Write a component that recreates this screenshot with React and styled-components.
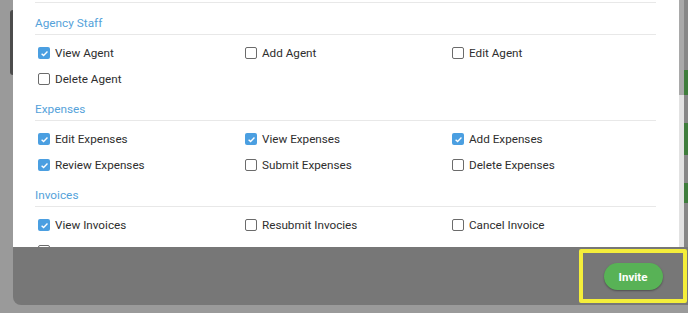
import React from "react";
import styled, { createGlobalStyle } from "styled-components";

const GlobalStyle = createGlobalStyle`
  html, body {
    margin: 0;
    padding: 0;
    background: #9a9a9a;
  }
  body {
    font-family: Roboto, "Liberation Sans", Arial, sans-serif;
  }
`;

const Page = styled.div`
  width: 688px;
  height: 313px;
  display: flex;
  background: #9a9a9a;
  overflow: hidden;
`;

const LeftGutter = styled.div`
  width: 13px;
  flex-shrink: 0;
  display: flex;
  justify-content: flex-end;
  align-items: flex-start;
  padding-top: 10px;
  box-sizing: border-box;
`;

const DarkTab = styled.div`
  width: 3px;
  height: 65px;
  background: #4c4c4c;
  border-radius: 3px 0 0 3px;
`;

const Main = styled.div`
  flex: 1;
  display: flex;
  flex-direction: column;
  min-width: 0;
`;

const Upper = styled.div`
  height: 247px;
  display: flex;
  flex-shrink: 0;
`;

const Body = styled.div`
  flex: 1;
  background: #fff;
  overflow: hidden;
  padding: 2px 23px 0 22px;
  box-sizing: border-box;
`;

const Rule = styled.div`
  height: 1px;
  background: #e8e8e8;
`;

const Heading = styled.div`
  height: 23px;
  line-height: 24px;
  margin-top: ${(p) => (p.first ? "8px" : "0")};
  font-size: 11.8px;
  color: #55a2da;
  border-bottom: 1px solid #e8e8e8;
`;

const Grid = styled.div`
  display: grid;
  grid-template-columns: repeat(3, 1fr);
  grid-auto-rows: 26px;
  padding: 5px 0 5px;
`;

const Item = styled.label`
  display: flex;
  align-items: center;
  gap: 5px;
  padding-left: 3px;
  font-size: 11.7px;
  color: #2e2e2e;
  white-space: nowrap;
`;

const Box = styled.span`
  width: 12px;
  height: 12px;
  box-sizing: border-box;
  border-radius: 2px;
  flex-shrink: 0;
  display: flex;
  align-items: center;
  justify-content: center;
  background: ${(p) => (p.checked ? "#4b9fe1" : "#fff")};
  border: ${(p) => (p.checked ? "none" : "1.5px solid #6b6b6b")};
`;

const Scrollbar = styled.div`
  width: 5px;
  background: #e2e2e2;
  display: flex;
  flex-direction: column;
`;

const Thumb = styled.div`
  height: 95px;
  background: #a9a9a9;
`;

const BehindStrip = styled.div`
  width: 4px;
  background: #878787;
  display: flex;
  flex-direction: column;
  padding-top: 70px;
  gap: 28px;
  box-sizing: border-box;
`;

const GreenBit = styled.div`
  height: ${(p) => p.h}px;
  background: #3f7d3c;
`;

const Footer = styled.div`
  height: 58px;
  flex-shrink: 0;
  background: #777777;
  border-bottom-left-radius: 8px;
  display: flex;
  justify-content: flex-end;
  align-items: flex-start;
  padding: 2px 1px 0 0;
  box-sizing: border-box;
`;

const Highlight = styled.div`
  width: 108px;
  height: 54px;
  box-sizing: border-box;
  border: 4px solid #f4ee3a;
  border-radius: 2px;
  display: flex;
  align-items: center;
  justify-content: center;
  padding-top: 1px;
`;

const InviteButton = styled.button`
  width: 59px;
  height: 27px;
  border: none;
  border-radius: 14px;
  background: #58b256;
  color: #fff;
  font-family: Roboto, "Liberation Sans", Arial, sans-serif;
  font-size: 11.5px;
  font-weight: 700;
  box-shadow: 0 1px 2px rgba(0, 0, 0, 0.35);
  padding: 0;
`;

const Check = () => (
  <svg width="9" height="9" viewBox="0 0 10 10">
    <path d="M1.8 5.2 L4 7.3 L8.3 2.8" fill="none" stroke="#fff" strokeWidth="1.5" />
  </svg>
);

const sections = [
  {
    title: "Agency Staff",
    items: [
      ["View Agent", true],
      ["Add Agent", false],
      ["Edit Agent", false],
      ["Delete Agent", false],
    ],
  },
  {
    title: "Expenses",
    items: [
      ["Edit Expenses", true],
      ["View Expenses", true],
      ["Add Expenses", true],
      ["Review Expenses", true],
      ["Submit Expenses", false],
      ["Delete Expenses", false],
    ],
  },
  {
    title: "Invoices",
    items: [
      ["View Invoices", true],
      ["Resubmit Invocies", false],
      ["Cancel Invoice", false],
      ["Edit Invoice", false],
    ],
  },
];

export default function App() {
  return (
    <Page>
      <GlobalStyle />
      <LeftGutter>
        <DarkTab />
      </LeftGutter>
      <Main>
        <Upper>
          <Body>
            <Rule />
            {sections.map((s, i) => (
              <div key={s.title}>
                <Heading first={i === 0}>{s.title}</Heading>
                <Grid>
                  {s.items.map(([label, checked]) => (
                    <Item key={label}>
                      <Box checked={checked}>{checked && <Check />}</Box>
                      {label}
                    </Item>
                  ))}
                </Grid>
              </div>
            ))}
          </Body>
          <Scrollbar>
            <Thumb />
          </Scrollbar>
          <BehindStrip>
            <GreenBit h={25} />
            <GreenBit h={32} />
            <GreenBit h={20} />
          </BehindStrip>
        </Upper>
        <Footer>
          <Highlight>
            <InviteButton>Invite</InviteButton>
          </Highlight>
        </Footer>
      </Main>
    </Page>
  );
}
